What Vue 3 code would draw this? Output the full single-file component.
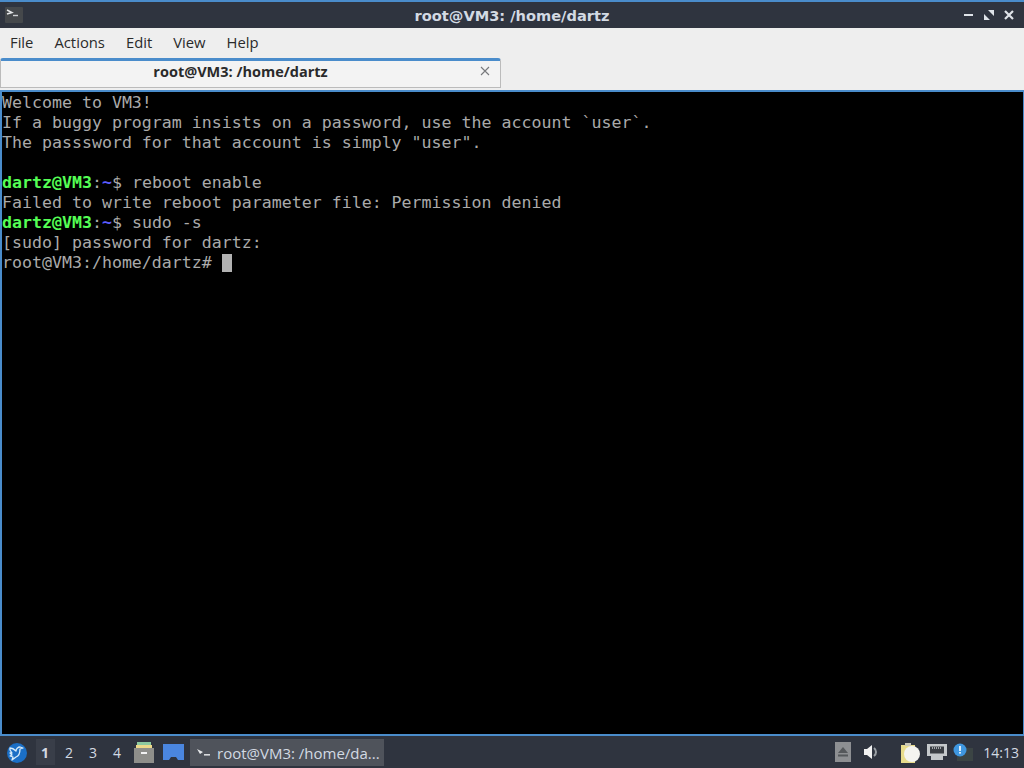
<script setup>
const menus = ['File', 'Actions', 'Edit', 'View', 'Help']
const desks = ['1', '2', '3', '4']
</script>

<template>
  <div class="screen">
    <header class="titlebar">
      <div class="appicon">
        <svg width="18" height="16" viewBox="0 0 18 16"><rect width="18" height="16" rx="1" fill="#45484b"/><path d="M2 3l5 2.5L2 7" fill="none" stroke="#e4e6e8" stroke-width="1.4"/><path d="M8 8.5h5" stroke="#cfd2d4" stroke-width="1.4"/></svg>
      </div>
      <div class="title">root@VM3: /home/dartz</div>
      <div class="winbtns">
        <svg width="12" height="12" viewBox="0 0 12 12"><rect x="1" y="5" width="9" height="2" fill="#dfe3e8"/></svg>
        <svg width="12" height="12" viewBox="0 0 12 12"><path d="M5 1h6v6zM7 11H1V5z" fill="#dfe3e8"/></svg>
        <svg width="12" height="12" viewBox="0 0 12 12"><path d="M2 2l8 8M10 2l-8 8" stroke="#dfe3e8" stroke-width="2.2"/></svg>
      </div>
    </header>
    <nav class="menubar">
      <span v-for="m in menus" :key="m" class="menu">{{ m }}</span>
    </nav>
    <div class="tabbar">
      <div class="tab">
        <span class="tabtitle">root@VM3: /home/dartz</span>
        <svg class="tabclose" width="10" height="10" viewBox="0 0 10 10"><path d="M1 1l8 8M9 1l-8 8" stroke="#77797c" stroke-width="1.1"/></svg>
      </div>
    </div>
    <main class="term">
      <div>Welcome to VM3!</div>
      <div>If a buggy program insists on a password, use the account `user`.</div>
      <div>The passsword for that account is simply "user".</div>
      <div>&nbsp;</div>
      <div><b class="g">dartz@VM3</b>:<b class="b">~</b>$ reboot enable</div>
      <div>Failed to write reboot parameter file: Permission denied</div>
      <div><b class="g">dartz@VM3</b>:<b class="b">~</b>$ sudo -s</div>
      <div>[sudo] password for dartz:</div>
      <div>root@VM3:/home/dartz# <span class="cursor">&nbsp;</span></div>
    </main>
    <footer class="panel">
      <div class="logo">
        <svg width="20" height="20" viewBox="0 0 20 20"><circle cx="10" cy="10" r="10" fill="#1b6fc6"/><path d="M3 5c2 0 4 1 6 3 0-2 2-4 4-4l3 1-3 1c0 4-1 7-4 8l-4 3 1-3-3-1 2-1-2-2 2 0-2-3z" fill="none" stroke="#d8ecfa" stroke-width="1.3" stroke-linejoin="round"/></svg>
      </div>
      <div class="desks">
        <span v-for="d in desks" :key="d" class="desk" :class="{ active: d === '1' }">{{ d }}</span>
      </div>
      <svg class="launch" width="20" height="21" viewBox="0 0 20 21">
        <rect x="3" y="0" width="14" height="3" fill="#8cc9a0"/><rect x="2" y="3" width="16" height="3" fill="#ecd98a"/>
        <rect x="0" y="6" width="20" height="15" fill="#8e8e8a"/><rect x="7" y="10" width="6" height="2" fill="#f2f2f2"/>
      </svg>
      <svg class="launch2" width="21" height="17" viewBox="0 0 21 17"><path d="M0 0h21v16h-6l-2-3H8l-2 3H0z" fill="#4a86e0"/></svg>
      <div class="task">
        <svg width="14" height="10" viewBox="0 0 14 10"><path d="M0 1l6 3-3 2z" fill="#e6e8ea"/><rect x="7" y="6" width="6" height="1.6" fill="#d8dadc"/></svg>
        <span class="tasktext">root@VM3: /home/da...</span>
      </div>
      <div class="tray">
        <div class="eject"><svg width="12" height="10" viewBox="0 0 12 10"><path d="M6 0l5 6H1z" fill="#55585b"/><rect x="1" y="7.5" width="10" height="2" fill="#55585b"/></svg></div>
        <svg class="vol" width="18" height="16" viewBox="0 0 18 16"><path d="M1 5h3l5-4v14l-5-4H1z" fill="#f2f2f2"/><path d="M11 4a5 5 0 0 1 0 8" fill="none" stroke="#9ba0a5" stroke-width="2"/></svg>
        <svg class="clip" width="20" height="21" viewBox="0 0 20 21"><rect x="0" y="3" width="14" height="18" fill="#e8dc8c"/><rect x="4" y="1" width="6" height="3" fill="#c9c7b8"/><circle cx="11" cy="12" r="8" fill="#f4f4f0"/></svg>
        <svg class="net" width="20" height="18" viewBox="0 0 20 18"><path d="M0 1h20v12h-4v4H4v-4H0z" fill="#c4c8cb"/><rect x="3" y="3.5" width="14" height="7" fill="#3a3e44"/><path d="M5 5h10" stroke="#c4c8cb" stroke-width="1.5" stroke-dasharray="1 1"/></svg>
        <svg class="note" width="20" height="19" viewBox="0 0 20 19"><rect x="4" y="5" width="16" height="13" fill="#3b4444"/><circle cx="7" cy="7" r="6.5" fill="#3f97e0"/><rect x="6.2" y="3" width="1.6" height="5" fill="#fff"/><rect x="6.2" y="9" width="1.6" height="1.6" fill="#fff"/></svg>
        <span class="clock">14:13</span>
      </div>
    </footer>
  </div>
</template>

<style>
html, body { margin: 0; background: #000; }
</style>

<style scoped>
.screen { width: 1024px; height: 768px; display: flex; flex-direction: column; overflow: hidden; font-family: "Open Sans", "Noto Sans", sans-serif; background: #000; }
.titlebar { height: 26px; flex: none; border-top: 2px solid #4a8ccb; background: #2f343f; display: flex; align-items: center; position: relative; }
.appicon { display: flex; margin-left: 5px; }
.title { position: absolute; left: 0; right: 0; text-align: center; color: #d3dae3; font-family: "DejaVu Sans", sans-serif; font-size: 14.6px; font-weight: 700; }
.winbtns { margin-left: auto; margin-right: 9px; display: flex; gap: 8px; }
.menubar { height: 30px; flex: none; background: #eeeeee; display: flex; align-items: center; padding-left: 10px; gap: 21px; font-size: 14.8px; color: #2a2a2a; padding-bottom: 2px; box-sizing: border-box; }
.tabbar { height: 32px; flex: none; background: #eeeeee; display: flex; box-sizing: border-box; }
.tab { width: 501px; height: 30px; box-sizing: border-box; border-top: 3px solid #4a8ccb; border-left: 1px solid #bbb; border-right: 1px solid #bbb; border-bottom: 1px solid #bbb; border-radius: 3px 3px 0 0; background: #f3f3f3; display: flex; align-items: center; position: relative; font-size: 14.5px; font-weight: 700; color: #2a2a2a; padding-bottom: 5px; }
.tabtitle { width: 100%; text-align: center; margin-left: -10px; }
.tabclose { position: absolute; right: 10px; top: 5px; }
.term { flex: none; height: 646px; box-sizing: border-box; padding-top: 1px; border-top: 2px solid #4a8ccb; border-left: 2px solid #4a8ccb; border-right: 1px solid #4a8ccb; border-bottom: 2px solid #4a8ccb; background: #000; color: #aaaaaa; font-family: "DejaVu Sans Mono", monospace; font-size: 16.6px; line-height: 20px; white-space: pre; }
.g { color: #55ff55; font-weight: 700; }
.b { color: #5c5cff; font-weight: 700; }
.cursor { display: inline-block; width: 10px; height: 18px; background: #b2b2b2; vertical-align: -1px; }
.panel { flex: 1; background: #2f343f; display: flex; align-items: center; color: #d3dae3; position: relative; }
.logo { width: 20px; height: 20px; margin-left: 7px; display: flex; margin-top: 1px; }
.desks { display: flex; margin-left: 5px; font-size: 14px; padding-left: 1px; align-items: center; }
.desk { width: 24px; height: 26px; display: flex; align-items: center; justify-content: center; }
.desk.active { width: 19px; margin: 0 2.5px; background: #393e49; font-weight: 700; }
.launch { margin-left: 5px; }
.launch2 { margin-left: 9px; }
.task { width: 194px; height: 27px; margin-left: 6px; background: #4f535b; display: flex; align-items: center; box-sizing: border-box; padding-left: 7px; gap: 6px; font-size: 15px; flex: none; margin-top: 1px; }
.tasktext { white-space: nowrap; }
.tray { margin-left: auto; display: flex; align-items: center; }
.eject { width: 16px; height: 20px; background: #8d8f92; display: flex; align-items: center; justify-content: center; }
.vol { margin-left: 12px; }
.clip { margin-left: 20px; }
.net { margin-left: 6px; }
.note { margin-left: 6px; }
.clock { margin-left: 10px; margin-right: 5px; font-size: 14px; }
</style>
